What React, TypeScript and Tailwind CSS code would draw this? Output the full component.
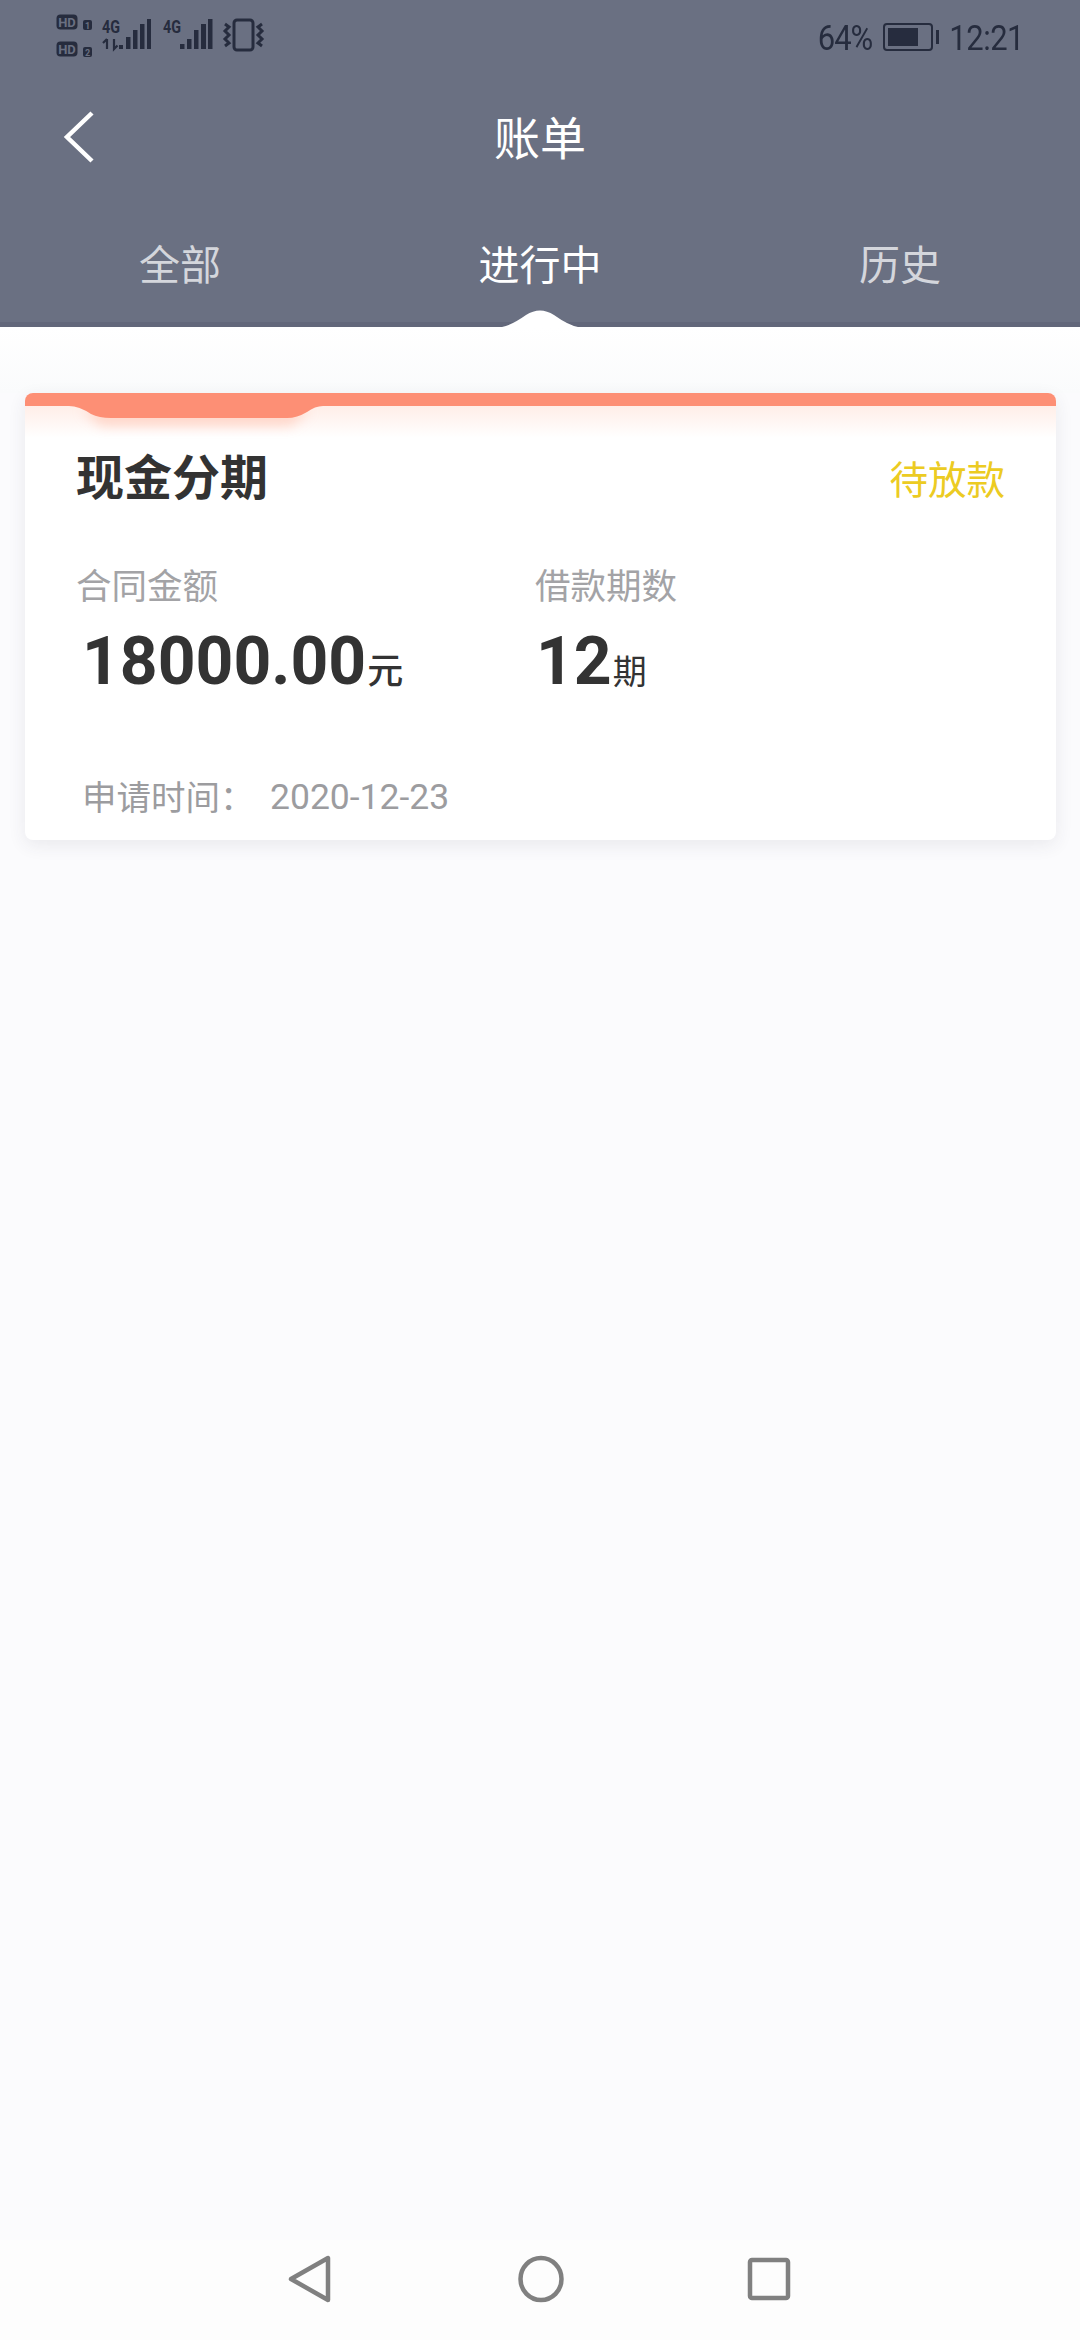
const cjk = "font-['Roboto','Noto_Sans_CJK_SC',sans-serif]";

function SignalIcons() {
  return (
    <svg width="220" height="60" viewBox="50 10 220 60" className="text-[#262c3e]" fill="currentColor">
      {/* HD badges */}
      <rect x="56.5" y="17.5" width="21" height="15" rx="4" />
      <text x="67" y="29.5" fontSize="13" fontWeight="700" fontFamily="Roboto" textAnchor="middle" fill="#6a7082">HD</text>
      <rect x="83" y="23" width="9" height="10" rx="2" />
      <text x="87.5" y="31.5" fontSize="9" fontWeight="700" fontFamily="Roboto" textAnchor="middle" fill="#6a7082">1</text>
      <rect x="56.5" y="44.5" width="21" height="15" rx="4" />
      <text x="67" y="56.5" fontSize="13" fontWeight="700" fontFamily="Roboto" textAnchor="middle" fill="#6a7082">HD</text>
      <rect x="83" y="50" width="9" height="10" rx="2" />
      <text x="87.5" y="58.5" fontSize="9" fontWeight="700" fontFamily="Roboto" textAnchor="middle" fill="#6a7082">2</text>

      {/* sim 1 */}
      <text x="102" y="36" fontSize="18" fontWeight="700" fontFamily="Roboto" textLength="18" lengthAdjust="spacingAndGlyphs">4G</text>
      <path d="M107 42v10M103 46l4-4M114 42v10l3.5-3.5" fill="none" stroke="currentColor" strokeWidth="2.2" />
      <rect x="119" y="48" width="4" height="4" />
      <rect x="126" y="40" width="4.5" height="12" />
      <rect x="133" y="33" width="4.5" height="19" />
      <rect x="140" y="27" width="4.5" height="25" />
      <rect x="147" y="22" width="4" height="30" />

      {/* sim 2 */}
      <text x="163" y="36" fontSize="18" fontWeight="700" fontFamily="Roboto" textLength="18" lengthAdjust="spacingAndGlyphs">4G</text>
      <rect x="180" y="47" width="4.5" height="5" />
      <rect x="187" y="42" width="4.5" height="10" />
      <rect x="194" y="33" width="4.5" height="19" />
      <rect x="201" y="27" width="5" height="25" />
      <rect x="208" y="22" width="4.5" height="30" />

      {/* vibrate */}
      <rect x="234" y="23" width="19" height="30" rx="3" fill="none" stroke="currentColor" strokeWidth="3" />
      <path d="M225 27l4 3-4 4 4 4-4 4 4 4-4 3" fill="none" stroke="currentColor" strokeWidth="3" />
      <path d="M262 27l-4 3 4 4-4 4 4 4-4 4 4 3" fill="none" stroke="currentColor" strokeWidth="3" />
    </svg>
  );
}

export default function App() {
  return (
    <div className={`flex min-h-[2340px] w-[1080px] flex-col bg-[#fbfbfd] ${cjk}`}>
      {/* Header */}
      <header className="relative h-[327px] bg-[#6a7082]">
        <div className="flex h-[74px] items-center justify-between pl-[50px] pr-[56px] text-[#262c3e]">
          <SignalIcons />
          <div className="flex items-center text-[31px] leading-none font-normal">
            <span className="scale-y-[1.15] tracking-[-1px]">64%</span>
            <div className="ml-[11px] mr-[10px] flex items-center">
              <div className="h-[28px] w-[50px] rounded-[4px] border-2 border-[#262c3e] p-[3px]">
                <div className="h-full w-[30px] bg-[#262c3e]" />
              </div>
              <div className="ml-[3px] h-[14px] w-[3px] bg-[#262c3e]" />
            </div>
            <span className="scale-y-[1.15] tracking-[-0.5px]">12:21</span>
          </div>
        </div>

        <div className="relative flex h-[126px] items-center justify-center pt-[4px]">
          <svg width="32" height="52" viewBox="0 0 32 52" className="absolute left-[63px] top-[37px]" fill="none" stroke="#fff" strokeWidth="4.5">
            <path d="M29 2 L4 26 L29 50" />
          </svg>
          <h1 className="text-[46px] leading-none font-normal text-white">账单</h1>
        </div>

        <div className="grid h-[127px] grid-cols-3 items-center pt-[6px] text-center text-[41px] leading-none">
          <span className="text-[#d4d6dc]">全部</span>
          <span className="text-white">进行中</span>
          <span className="text-[#d4d6dc]">历史</span>
        </div>

        <div className="absolute inset-x-0 bottom-0 h-[5px] bg-[#62677a]" />
        <svg width="76" height="18" viewBox="0 0 76 18" className="absolute bottom-0 left-[502px]" fill="#fff">
          <path d="M0 18 Q10 16 24 6 Q38 -3 52 6 Q66 16 76 18 Z" />
        </svg>
      </header>

      {/* Content */}
      <main className="flex-1">
        <div className="h-[66px] bg-gradient-to-b from-white to-[#fafbfc]" />
        <section className="relative ml-[25px] mr-[24px] h-[447px] overflow-hidden rounded-[8px] bg-white shadow-[0_5px_18px_rgba(60,60,80,0.09)]">
          <div className="h-[13px] bg-[#fd8f75]" />
          <div className="h-[32px] bg-gradient-to-b from-[#ffeee8] to-white" />
          <svg width="290" height="50" viewBox="0 0 290 50" className="absolute left-[26px] top-[13px]">
            <defs>
              <filter id="bumpGlow" x="-10%" y="-50%" width="120%" height="250%">
                <feGaussianBlur stdDeviation="6" />
              </filter>
            </defs>
            <path d="M30 4 H260 L240 20 H50 Z" fill="#ffc9b8" opacity="0.7" filter="url(#bumpGlow)" />
            <path d="M18 0 Q28 0 40 8 Q48 12 60 12 H236 Q246 12 256 6 Q264 0 272 0 Z" fill="#fd8f75" />
          </svg>

          <div className="relative mt-[11px] flex h-[60px] items-center justify-between pl-[51px] pr-[51px]">
            <h2 className="text-[48px] leading-none font-bold text-[#333333]">现金分期</h2>
            <span className="pt-[4px] text-[38.5px] leading-none text-[#eccb22]">待放款</span>
          </div>

          <div className="mt-[55px] flex pl-[51px]">
            <div className="w-[459px]">
              <div className="flex h-[44px] items-center pt-[3px] text-[35.5px] leading-none text-[#a3a3a6]">合同金额</div>
              <div className="mt-[14px] ml-[6px] flex h-[80px] items-baseline text-[66px] leading-[80px] font-bold text-[#333333]">
                18000.00
                <span className="ml-[1px] text-[36px] font-medium">元</span>
              </div>
            </div>
            <div>
              <div className="flex h-[44px] items-center pt-[3px] text-[35.5px] leading-none text-[#a3a3a6]">借款期数</div>
              <div className="mt-[14px] ml-[1px] flex h-[80px] items-baseline text-[66px] leading-[80px] font-bold text-[#333333]">
                12
                <span className="ml-[1px] text-[34px] font-normal">期</span>
              </div>
            </div>
          </div>

          <div className="mt-[73px] flex h-[44px] items-center pl-[57px] pt-[2px] text-[34.5px] leading-none text-[#9c9c9f]">
            <span className="w-[188px]">申请时间：</span>
            <span className="text-[35.5px]">2020-12-23</span>
          </div>
        </section>
      </main>

      {/* Navigation bar */}
      <nav className="flex h-[100px] items-center bg-[#fdfdfd] pb-[22px] pl-[288px]">
        <svg width="44" height="48" viewBox="0 0 44 48" fill="none" stroke="#808080" strokeWidth="4.5" strokeLinejoin="round">
          <path d="M40 3 V45 L3 24 Z" />
        </svg>
        <svg width="46" height="48" viewBox="0 0 46 48" fill="none" stroke="#808080" strokeWidth="4.5" className="ml-[186px]">
          <ellipse cx="23" cy="24" rx="20.5" ry="21" />
        </svg>
        <svg width="44" height="44" viewBox="0 0 44 44" fill="none" stroke="#808080" strokeWidth="4.5" strokeLinejoin="round" className="ml-[183px]">
          <rect x="3" y="3" width="38" height="38" rx="2" />
        </svg>
      </nav>
    </div>
  );
}
